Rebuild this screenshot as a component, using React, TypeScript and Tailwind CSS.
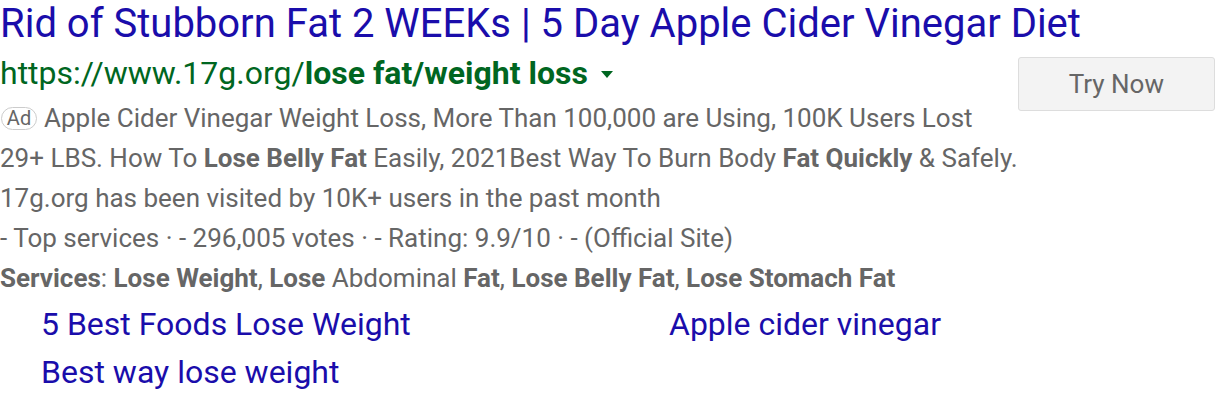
export default function App() {
  const sitelinks = [
    "5 Best Foods Lose Weight",
    "Apple cider vinegar",
    "Best way lose weight",
  ];

  return (
    <div className="w-[1216px] h-[402px] bg-white overflow-hidden font-['Roboto',sans-serif]">
      <a className="block text-[40px] leading-[48px] text-[#1a0dab] whitespace-nowrap">
        Rid of Stubborn Fat 2 WEEKs | 5 Day Apple Cider Vinegar Diet
      </a>
      <div className="flex items-start justify-between">
        <div>
          <div className="flex items-center text-[32px] leading-[50px] text-[#006621] whitespace-nowrap">
            <span>https://www.17g.org/</span>
            <span className="font-bold">lose fat/weight loss</span>
            <span className="ml-[13px] mt-[2px] w-0 h-0 border-l-[6px] border-r-[6px] border-t-[7px] border-l-transparent border-r-transparent border-t-[#006621]"></span>
          </div>
          <div className="text-[26px] leading-[40px] text-[#666] whitespace-nowrap">
            <div className="flex items-center">
              <span className="mr-[7px] ml-[1px] w-[36px] h-[23px] flex items-center justify-center rounded-full border border-[#ccc] text-[20px] leading-none">Ad</span>
              <span>Apple Cider Vinegar Weight Loss, More Than 100,000 are Using, 100K Users Lost</span>
            </div>
            <div>
              29+ LBS. How To <b>Lose Belly Fat</b> Easily, 2021Best Way To Burn Body <b>Fat Quickly</b> &amp; Safely.
            </div>
            <div>17g.org has been visited by 10K+ users in the past month</div>
            <div>- Top services · - 296,005 votes · - Rating: 9.9/10 · - (Official Site)</div>
            <div>
              <b>Services</b>: <b>Lose Weight</b>, <b>Lose</b> Abdominal <b>Fat</b>, <b>Lose Belly Fat</b>, <b>Lose Stomach Fat</b>
            </div>
          </div>
        </div>
        <button className="mt-[9px] mr-[1px] w-[198px] h-[54px] bg-[#f3f3f3] border border-[#ddd] rounded-[3px] text-[26px] text-[#666]">
          Try Now
        </button>
      </div>
      <div className="mt-[2px] grid grid-cols-[628px_1fr] pl-[41px] text-[32px] leading-[48px] text-[#1a0dab]">
        {sitelinks.map((s) => (
          <a key={s} className="whitespace-nowrap">{s}</a>
        ))}
      </div>
    </div>
  );
}
